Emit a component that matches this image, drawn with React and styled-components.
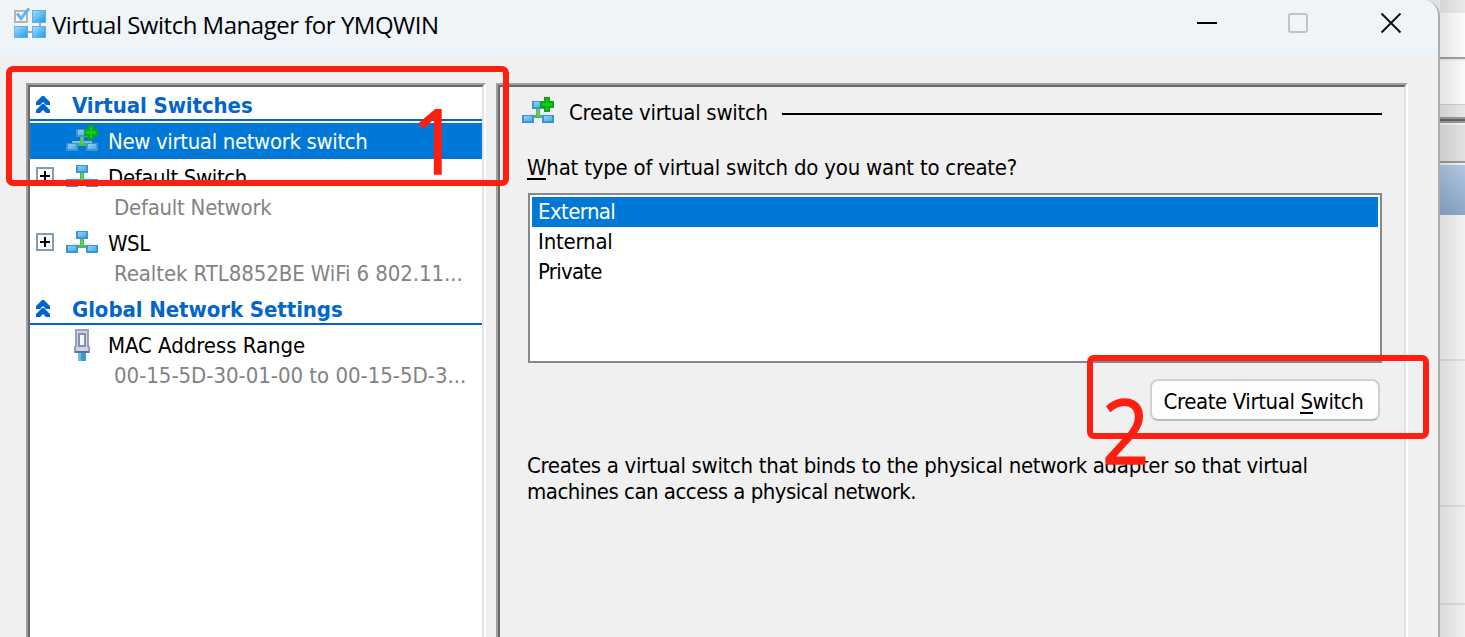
import React from 'react';
import styled, { createGlobalStyle, css } from 'styled-components';

const ui = '"DejaVu Sans Condensed", "DejaVu Sans", sans-serif';
const blue = '#0078d7';

const Global = createGlobalStyle`
  * { box-sizing: border-box; }
  html, body { margin: 0; height: 100%; overflow: hidden; }
  body { background: #f0f0f0; color: #000; font: 22px/26px ${ui}; }
`;

const Screen = styled.div`
  position: relative;
  display: flex;
  width: 1465px;
  height: 637px;
  overflow: hidden;
  background: #e2e2e2;
`;

const Window = styled.main`
  display: flex;
  flex-direction: column;
  flex: none;
  width: 1440px;
  height: 660px;
  background: #f0f0f0;
  border-right: 2px solid #acacad;
  border-radius: 0 16px 0 0;
  overflow: hidden;
`;

const TitleBar = styled.header`
  display: flex;
  align-items: center;
  height: 55px;
  flex: none;
  padding: 0 36px 9px 14px;
  background: #eff4f9;
`;

const Title = styled.h1`
  flex: 1;
  margin: 4px 0 0 5px;
  font: 400 24px/30px "Open Sans", sans-serif;
  letter-spacing: -0.485px;
  white-space: nowrap;
`;

const Captions = styled.div`
  display: flex;
  align-items: center;
  gap: 71px;
`;

const Panes = styled.div`
  display: flex;
  flex: 1;
  gap: 10px;
  padding: 28px 30px 0 26px;
`;

const Sunken = styled.section`
  width: ${(p) => p.$width}px;
  background: ${(p) => p.$bg};
  border: solid #a0a0a0;
  border-width: 2px 2px 0 2px;
  border-right-color: #fff;
`;

const SunkenInner = styled.div`
  height: 100%;
  border: solid #696969;
  border-width: 2px 2px 0 2px;
  border-right-color: #e3e3e3;
  padding: ${(p) => p.$pad || '0'};
`;

const Group = styled.div`
  display: flex;
  align-items: center;
  height: 34px;
  margin-bottom: 2px;
  padding: 3px 0 0 6px;
  border-bottom: 2px solid #0066cc;
  color: #0066cc;
  font-weight: 700;
  letter-spacing: -0.075px;
`;

const GroupLabel = styled.span`
  margin: 2px 0 0 21px;
`;

const Item = styled.div`
  display: flex;
  align-items: center;
  height: 36px;
  padding-left: 6px;
  ${(p) => p.$selected && css`background: ${blue}; color: #fff;`}
`;

const Toggle = styled.span`
  display: grid;
  place-items: center;
  width: 18px;
  height: 18px;
  margin-bottom: 2px;
  border: 2px solid ${(p) => (p.$empty ? 'transparent' : '#7f9db9')};
`;

const IconSlot = styled.span`
  display: flex;
  justify-content: center;
  align-items: flex-end;
  width: 32px;
  height: ${(p) => p.$h || 28}px;
  margin: ${(p) => p.$m || '0 10px 8px 12px'};
`;

const Label = styled.span`
  padding-top: ${(p) => (p.$flush ? 0 : 2)}px;
  letter-spacing: ${(p) => p.$track || 0}px;
  white-space: nowrap;
`;

const Sub = styled.div`
  height: 30px;
  padding: 0 0 0 84px;
  line-height: 25px;
  color: #838383;
  letter-spacing: ${(p) => p.$track || 0}px;
  white-space: nowrap;
`;

const Heading = styled.div`
  display: flex;
  align-items: center;
  height: 32px;
  margin-right: 22px;
`;

const Rule = styled.span`
  flex: 1;
  height: 2px;
  margin: 2px 0 0 14px;
  background: #000;
`;

const Question = styled.p`
  margin: 26px 0 0 5px;
  height: 38px;
  line-height: 26px;
  letter-spacing: -0.22px;
  white-space: nowrap;
`;

const Key = styled.span`
  display: inline-block;
  height: 25px;
  border-bottom: 2px solid #000;
`;

const ListBox = styled.ul`
  width: 854px;
  height: 170px;
  margin: 0 0 16px 6px;
  padding: 2px;
  list-style: none;
  background: #fff;
  border: 2px solid #828790;
`;

const Option = styled.li`
  height: 30px;
  padding-left: 6px;
  line-height: 29px;
  letter-spacing: ${(p) => p.$track}px;
  ${(p) => p.$selected && css`background: ${blue}; color: #fff;`}
`;

const Actions = styled.div`
  display: flex;
  justify-content: flex-end;
  padding-right: 24px;
`;

const Button = styled.button`
  width: 230px;
  height: 42px;
  padding: 3px 3px 0 0;
  background: #fdfdfd;
  border: 2px solid #d0d0d0;
  border-bottom-color: #bcbcbc;
  border-radius: 8px;
  color: #000;
  font: 22px/26px ${ui};
  letter-spacing: -0.4px;
  white-space: nowrap;
`;

const Description = styled.p`
  margin: 32px 0 0 5px;
  white-space: nowrap;
`;

const Line = styled.span`
  display: block;
  letter-spacing: ${(p) => p.$track}px;
`;

const Backdrop = styled.aside`
  display: flex;
  flex-direction: column;
  flex: 1;
`;

const Band = styled.div`
  flex: none;
  height: ${(p) => p.$h}px;
  background: linear-gradient(90deg, rgba(0, 0, 0, 0.09), rgba(0, 0, 0, 0)), ${(p) => p.$c};
`;

const Callout = styled.div`
  position: absolute;
  left: ${(p) => p.$x}px;
  top: ${(p) => p.$y}px;
  width: ${(p) => p.$w}px;
  height: ${(p) => p.$h}px;
  border: 6px solid #ff1f10;
  border-radius: 7px;
`;

const Step = styled.span`
  position: absolute;
  left: ${(p) => p.$x}px;
  top: ${(p) => p.$y}px;
  color: #ff1f10;
  font: 89px/100px "Open Sans", sans-serif;
  -webkit-text-stroke: 1.4px #ff1f10;
  transform: scaleX(0.93);
  transform-origin: 0 0;
`;

const Svg = styled.svg`
  display: block;
  flex: none;
`;

const HiddenSvg = styled.svg`
  position: absolute;
`;

const Defs = () => (
  <HiddenSvg width="0" height="0">
    <defs>
      <linearGradient id="pc" x1="0" y1="0" x2="1" y2="1">
        <stop offset="0" stopColor="#8fd0fa" />
        <stop offset="1" stopColor="#45b0f0" />
      </linearGradient>
      <linearGradient id="tile" x1="0" y1="0" x2="1" y2="1">
        <stop offset="0" stopColor="#a5dcff" />
        <stop offset="1" stopColor="#189bee" />
      </linearGradient>
    </defs>
  </HiddenSvg>
);

const Pc = ({ x, y }) => (
  <>
    <rect x={x} y={y} width="12" height="8" fill="#4294cc" />
    <rect x={x + 2} y={y + 1} width="8" height="5" fill="url(#pc)" />
  </>
);

const NetworkIcon = ({ plus }) => (
  <Svg width="32" height="28" viewBox="0 0 32 28">
    <path d="M6 19h20" stroke="#dfe5e0" strokeOpacity="0.600" strokeWidth="2" />
    <path d="M14 12h4v8h2v3h-8v-3h2z" fill="#4fbb52" />
    <path d="M15 14h2v7h-2z" fill="#62cb62" />
    <Pc x={10} y={6} />
    <Pc x={0} y={20} />
    <Pc x={20} y={20} />
    {plus && (
      <path d="M23 3h4v4h4v5h-4v4h-4v-4h-4v-5h4z" fill="#08d30c" stroke="#12a31c" strokeWidth="2" />
    )}
  </Svg>
);

const AppIcon = () => (
  <Svg width="33" height="31" viewBox="0 0 33 31">
    <path d="M26 14v9M14 24h5" stroke="#a6a8aa" strokeWidth="2" />
    <rect x="1" y="3" width="12" height="11" fill="#f5f7fa" stroke="#b4b4b4" strokeWidth="2" />
    <rect x="18.500" y="2.500" width="13" height="12" fill="url(#tile)" stroke="#6caed4" />
    <rect x="0.500" y="18.500" width="13" height="11" fill="url(#tile)" stroke="#6caed4" />
    <rect x="18.500" y="18.500" width="13" height="11" fill="url(#tile)" stroke="#6caed4" />
    <path d="M3 5.500l4 5 8-10" fill="none" stroke="#62b4f3" strokeWidth="3" />
  </Svg>
);

const Chevrons = () => (
  <Svg width="15" height="18" viewBox="0 0 15 18">
    <path d="M6 0h2l6 6v3h-4L7 6 4 9H0V6zM6 8h2l6 6v3h-4l-3-3-3 3H0v-3z" fill="#0066cc" />
  </Svg>
);

const PlusMark = () => (
  <Svg width="10" height="10" viewBox="0 0 10 10">
    <path d="M0 5h10M5 0v10" stroke="#000" strokeWidth="2" />
  </Svg>
);

const PlugIcon = () => (
  <Svg width="16" height="32" viewBox="0 0 16 32">
    <path d="M4 24h8v8H4z" fill="#3a9cc9" />
    <path d="M4 24h3v8H4z" fill="#6fc0de" />
    <path d="M2 1h12v16l1 1v5H1v-5l1-1z" fill="#ccd3e2" stroke="#98a2b6" strokeWidth="2" />
    <path d="M1 23h14" stroke="#5f7391" strokeWidth="2" />
    <rect x="5" y="5" width="6" height="12" fill="#f4f6fa" stroke="#8790a6" strokeWidth="2" />
  </Svg>
);

const bands = [
  [13, '#eaeaea'], [44, '#fbfbfb'], [2, '#a0a0a0'], [2, '#e9eef3'], [43, '#fafafa'], [1, '#cfcfcf'],
  [12, '#e6e6e6'], [2, '#989898'], [2, '#666'], [2, '#989898'], [2, '#f3f3f3'], [36, '#e1e1e1'],
  [2, '#9a9a9a'], [2, '#f0f0f0'], [50, 'linear-gradient(#b1c8e3, #8ba7c6)'], [144, '#f2f2f2'],
  [2, '#dedede'], [144, '#f0f0f0'], [2, '#dcdcdc'], [96, '#f0f0f0'], [2, '#dcdcdc'], [40, '#f0f0f0'],
];

export default function App() {
  return (
    <Screen>
      <Global />
      <Defs />
      <Window>
        <TitleBar>
          <AppIcon />
          <Title>Virtual Switch Manager for YMQWIN</Title>
          <Captions>
            <Svg width="20" height="20" viewBox="0 0 20 20">
              <path d="M0 10h20" stroke="#000" strokeWidth="2" />
            </Svg>
            <Svg width="21" height="20" viewBox="0 0 21 20">
              <rect x="1" y="1" width="18" height="18" rx="2" fill="none" stroke="#c0c3c7" strokeWidth="2" />
            </Svg>
            <Svg width="22" height="22" viewBox="0 0 22 22">
              <path d="M1.500 1.500l19 19M20.500 1.500l-19 19" stroke="#111" strokeWidth="2" />
            </Svg>
          </Captions>
        </TitleBar>
        <Panes>
          <Sunken $width={460} $bg="#fff">
            <SunkenInner>
              <Group>
                <Chevrons />
                <GroupLabel>Virtual Switches</GroupLabel>
              </Group>
              <Item $selected>
                <Toggle $empty />
                <IconSlot><NetworkIcon plus /></IconSlot>
                <Label $track={-0.36}>New virtual network switch</Label>
              </Item>
              <Item>
                <Toggle><PlusMark /></Toggle>
                <IconSlot><NetworkIcon /></IconSlot>
                <Label $track={-0.36}>Default Switch</Label>
              </Item>
              <Sub $track={-0.25}>Default Network</Sub>
              <Item>
                <Toggle><PlusMark /></Toggle>
                <IconSlot><NetworkIcon /></IconSlot>
                <Label $track={-0.5}>WSL</Label>
              </Item>
              <Sub $track={-0.08}>Realtek RTL8852BE WiFi 6 802.11...</Sub>
              <Group>
                <Chevrons />
                <GroupLabel>Global Network Settings</GroupLabel>
              </Group>
              <Item>
                <Toggle $empty />
                <IconSlot $h={32} $m="0 10px 0 12px"><PlugIcon /></IconSlot>
                <Label $track={-0.055}>MAC Address Range</Label>
              </Item>
              <Sub $track={-0.02}>00-15-5D-30-01-00 to 00-15-5D-3...</Sub>
            </SunkenInner>
          </Sunken>
          <Sunken $width={912} $bg="#f0f0f0">
            <SunkenInner $pad="10px 0 0 22px">
              <Heading>
                <IconSlot $m="0 15px 8px 0"><NetworkIcon plus /></IconSlot>
                <Label $flush $track={-0.28}>Create virtual switch</Label>
                <Rule />
              </Heading>
              <Question><Key>W</Key>hat type of virtual switch do you want to create?</Question>
              <ListBox>
                <Option $selected $track={-0.6}>External</Option>
                <Option $track={-0.2}>Internal</Option>
                <Option $track={-0.75}>Private</Option>
              </ListBox>
              <Actions>
                <Button>Create Virtual <Key>S</Key>witch</Button>
              </Actions>
              <Description>
                <Line $track={-0.32}>Creates a virtual switch that binds to the physical network adapter so that virtual</Line>
                <Line $track={-0.51}>machines can access a physical network.</Line>
              </Description>
            </SunkenInner>
          </Sunken>
        </Panes>
      </Window>
      <Backdrop>
        {bands.map(([h, c], i) => <Band key={i} $h={h} $c={c} />)}
      </Backdrop>
      <Callout $x={6} $y={66} $w={503} $h={120} />
      <Step $x={412} $y={90}>1</Step>
      <Callout $x={1087} $y={355} $w={342} $h={84} />
      <Step $x={1102} $y={380}>2</Step>
    </Screen>
  );
}
